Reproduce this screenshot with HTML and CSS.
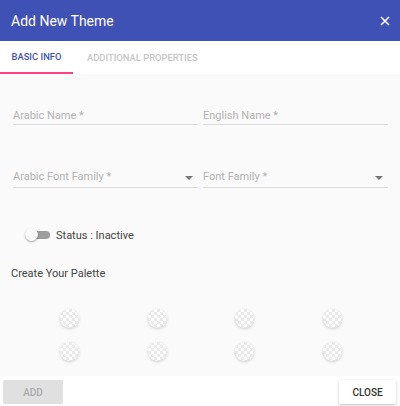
FILE: index.html
```html
<!DOCTYPE html>
<html>
<head>
<meta charset="utf-8">
<link rel="stylesheet" href="styles.css">
</head>
<body>
<div class="dialog">
  <div class="header">
    <span class="title">Add New Theme</span>
    <svg class="close-x" width="10" height="10" viewBox="0 0 10 10"><path d="M1 1L9 9M9 1L1 9" stroke="#fff" stroke-width="1.6" fill="none"/></svg>
  </div>
  <div class="tabs">
    <div class="tab active">BASIC INFO</div>
    <div class="tab">ADDITIONAL PROPERTIES</div>
  </div>
  <div class="content">
    <div class="row row1">
      <div class="field"><span class="label">Arabic Name *</span></div>
      <div class="field"><span class="label">English Name *</span></div>
    </div>
    <div class="row row2">
      <div class="field select"><span class="label">Arabic Font Family *</span><span class="arrow"></span></div>
      <div class="field select"><span class="label">Font Family *</span><span class="arrow"></span></div>
    </div>
    <div class="status">
      <span class="switch"><span class="track"></span><span class="thumb"></span></span>
      <span class="status-text">Status : Inactive</span>
    </div>
    <div class="palette-title">Create Your Palette</div>
    <div class="palette">
      <span class="swatch"></span><span class="swatch"></span><span class="swatch"></span><span class="swatch"></span>
      <span class="swatch"></span><span class="swatch"></span><span class="swatch"></span><span class="swatch"></span>
    </div>
  </div>
  <div class="footer">
    <button class="btn btn-add">ADD</button>
    <button class="btn btn-close">CLOSE</button>
  </div>
</div>
</body>
</html>
```
FILE: styles.css
```css
html, body { margin: 0; padding: 0; }
body { font-family: Roboto, "Liberation Sans", sans-serif; background: #fafafa; width: 400px; height: 406px; overflow: hidden; }
.dialog { display: flex; flex-direction: column; height: 406px; }
.header { height: 41px; background: #3f51b5; display: flex; align-items: center; justify-content: space-between; padding: 0 10px 0 11px; }
.title { color: #fff; font-size: 14px; font-weight: 400; }
.close-x { display: block; }
.tabs { height: 33px; background: #fff; display: flex; }
.tab { font-size: 9.4px; font-weight: 500; color: #c6c6c6; display: flex; align-items: center; padding: 0 11px 1px 14px; box-sizing: border-box; }
.tab.active { color: #3f51b5; border-bottom: 2px solid #ff4081; width: 73px; justify-content: center; padding: 0; }
.content { flex: 1; padding: 0 12px 0 11px; }
.row { display: flex; gap: 5px; padding-left: 2px; }
.row1 { margin-top: 36px; }
.row1 .field { height: 14px; }
.row2 { margin-top: 46px; }
.row2 .field { height: 16px; }
.field { flex: 1; border-bottom: 1px solid #dcdcdc; position: relative; display: flex; align-items: flex-start; }
.label { font-size: 11px; color: #b3b3b3; line-height: 12px; }
.arrow { position: absolute; right: 5px; top: 5px; width: 0; height: 0; border-left: 4px solid transparent; border-right: 4px solid transparent; border-top: 4px solid #777; }
.status { display: flex; align-items: center; margin-top: 40px; padding-left: 14px; }
.switch { position: relative; width: 26px; height: 14px; display: inline-block; }
.track { position: absolute; left: 8px; top: 3px; width: 17px; height: 8px; border-radius: 4px; background: #9e9e9e; }
.thumb { position: absolute; left: 0; top: 0; width: 13px; height: 13px; border-radius: 50%; background: #fafafa; box-shadow: 0 1px 2px rgba(0,0,0,0.35); }
.status-text { font-size: 11px; color: #444; margin-left: 5px; }
.palette-title { font-size: 11px; color: #444; margin-top: 25px; }
.palette { display: grid; grid-template-columns: repeat(4, 19px); justify-content: space-between; row-gap: 14px; margin: 29px 46px 0 49px; }
.swatch { width: 19px; height: 19px; border-radius: 50%; box-shadow: 0 1px 3px rgba(0,0,0,0.18); background-color: #fff; background-image: linear-gradient(45deg, #e9e9e9 25%, transparent 25%, transparent 75%, #e9e9e9 75%), linear-gradient(45deg, #e9e9e9 25%, transparent 25%, transparent 75%, #e9e9e9 75%); background-size: 6px 6px; background-position: 0 0, 3px 3px; }
.footer { height: 30px; background: #fff; display: flex; justify-content: space-between; align-items: flex-start; padding: 4px 4px 0 3px; box-sizing: border-box; }
.btn { font-family: Roboto, "Liberation Sans", sans-serif; font-size: 10px; font-weight: 500; height: 24px; border: none; border-radius: 2px; padding: 0; }
.btn-add { width: 60px; background: #e0e0e0; color: #ababab; }
.btn-close { width: 57px; background: #fff; color: #333; box-shadow: 0 1px 3px rgba(0,0,0,0.25); }
```
